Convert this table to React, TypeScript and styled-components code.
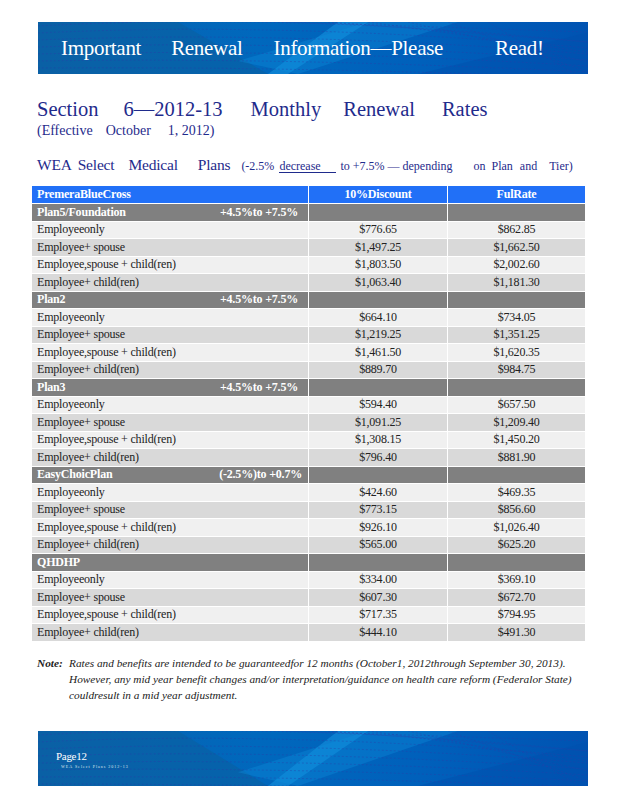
import React from "react";
import styled, { createGlobalStyle } from "styled-components";

const GlobalStyle = createGlobalStyle`
  html, body { margin: 0; padding: 0; background: #ffffff; }
  body { font-family: "Liberation Serif", "DejaVu Serif", "Times New Roman", serif; color: #222; }
`;

const Page = styled.div`
  width: 618px;
  height: 800px;
  overflow: hidden;
  display: flex;
  flex-direction: column;
`;

const Banner = styled.div<{ $h: number; $top: number }>`
  position: relative;
  overflow: hidden;
  flex: none;
  margin: ${(p) => p.$top}px 30px 0 38px;
  height: ${(p) => p.$h}px;
  background: linear-gradient(90deg, #0a63ad 0%, #0068bd 40%, #0060bb 70%, #0053b2 100%);
`;

const BannerArt = styled.svg`
  position: absolute;
  inset: 0;
  width: 100%;
  height: 100%;
  pointer-events: none;
`;

const BannerText = styled.div`
  position: relative;
  height: 100%;
  display: flex;
  align-items: center;
  padding-left: 23px;
  color: #ffffff;
  font-family: "Liberation Serif", "Times New Roman", serif;
  font-size: 21px;
  letter-spacing: -0.3px;
`;

const W = styled.span<{ $ml?: number }>`
  display: inline-block;
  margin-left: ${(p) => p.$ml ?? 0}px;
  white-space: pre;
`;

const Heading = styled.div`
  margin: 23px 0 0 37px;
  font-size: 20.5px;
  line-height: 24px;
  color: #1f2b8c;
  white-space: nowrap;
`;

const Sub = styled.div`
  margin: 2px 0 0 37px;
  font-size: 14px;
  line-height: 16px;
  color: #1f2b8c;
  white-space: nowrap;
`;

const PlanLine = styled.div`
  margin: 17px 0 0 37px;
  font-size: 15.5px;
  line-height: 18px;
  color: #1f2b8c;
  white-space: nowrap;
  display: flex;
  align-items: baseline;
  letter-spacing: -0.2px;
`;

const Small = styled.span<{ $ml?: number; $w?: number; $u?: boolean }>`
  display: inline-block;
  font-size: 12px;
  letter-spacing: 0;
  margin-left: ${(p) => p.$ml ?? 0}px;
  ${(p) => (p.$w ? `width: ${p.$w}px;` : "")}
  ${(p) => (p.$u ? "border-bottom: 1px solid #1f2b8c; line-height: 12px;" : "")}
  white-space: pre;
`;

const Table = styled.table`
  margin: 11px 0 0 31px;
  width: 554px;
  border-collapse: collapse;
  table-layout: fixed;
  font-size: 12px;
  flex: none;
`;

const Tr = styled.tr`
  height: 17.5px;
`;

const Th = styled.th<{ $align?: string }>`
  background: #2170f7;
  color: #ffffff;
  font-weight: bold;
  padding: 0 5px;
  text-align: ${(p) => p.$align ?? "center"};
  border: 1px solid #ffffff;
  border-top: none;
  line-height: 15px;
  letter-spacing: -0.2px;
`;

const GroupCell = styled.td`
  background: #808080;
  color: #ffffff;
  font-weight: bold;
  padding: 0 5px;
  border: 1px solid #ffffff;
  line-height: 15px;
  letter-spacing: -0.2px;
`;

const GroupInner = styled.div<{ $pr: number }>`
  display: flex;
  justify-content: space-between;
  padding-right: ${(p) => p.$pr}px;
`;

const Td = styled.td<{ $alt: boolean; $align?: string }>`
  background: ${(p) => (p.$alt ? "#d9d9d9" : "#f0f0f0")};
  color: #222;
  padding: 0 5px;
  text-align: ${(p) => p.$align ?? "left"};
  border: 1px solid #ffffff;
  line-height: 15px;
  letter-spacing: -0.2px;
  white-space: pre;
`;

const Note = styled.div`
  margin: 13px 0 0 37px;
  display: grid;
  grid-template-columns: 32px 1fr;
  font-style: italic;
  font-size: 11.3px;
  line-height: 16px;
  color: #222;
  white-space: nowrap;
`;

const NoteLabel = styled.span`
  font-weight: bold;
`;

const FooterText = styled.div`
  position: relative;
  padding: 19px 0 0 18px;
  color: #ffffff;
  display: flex;
  flex-direction: column;
  gap: 1px;
`;

const PageNo = styled.span`
  font-size: 11px;
  line-height: 13px;
  letter-spacing: -0.3px;
`;

const Tiny = styled.span`
  font-size: 4px;
  line-height: 6px;
  margin-left: 5px;
  letter-spacing: 1px;
  opacity: 0.85;
`;

const Art: React.FC<{ h: number }> = ({ h }) => (
  <BannerArt viewBox={`0 0 550 ${h}`} preserveAspectRatio="none">
    <polygon points={`0,0 140,0 230,${h} 0,${h}`} fill="#0b5f9f" opacity="0.55" />
    <polygon points={`230,${h} 300,0 330,0 250,${h}`} fill="#1aa0e8" opacity="0.45" />
    <polygon points={`200,${h * 0.75} 330,0 420,0 260,${h}`} fill="#0d8fdc" opacity="0.35" />
    <polygon points={`380,${h} 550,${h * 0.2} 550,${h}`} fill="#004fae" opacity="0.5" />
    {Array.from({ length: 9 }).map((_, i) => (
      <path
        key={i}
        d={`M0 ${4 + i * 7} Q 250 ${-10 + i * 9} 550 ${20 + i * 6}`}
        stroke="#2a3fa8"
        strokeWidth="0.6"
        strokeDasharray="2 2"
        fill="none"
        opacity="0.7"
      />
    ))}
    {Array.from({ length: 6 }).map((_, i) => (
      <path
        key={"b" + i}
        d={`M${250 + i * 40} 0 L ${550} ${10 + i * 10}`}
        stroke="#2a3fa8"
        strokeWidth="0.6"
        strokeDasharray="2 2"
        fill="none"
        opacity="0.6"
      />
    ))}
  </BannerArt>
);

type Row = [string, string, string];
type Group = { name: string; range: string; pr: number; rows: Row[] };

const rowsOf = (a: string[], b: string[]): Row[] => {
  const labels = ["Employeeonly", "Employee+ spouse", "Employee,spouse + child(ren)", "Employee+ child(ren)"];
  return labels.map((l, i) => [l, a[i], b[i]] as Row);
};

const groups: Group[] = [
  {
    name: "Plan5/Foundation",
    range: "+4.5%to +7.5%",
    pr: 5,
    rows: rowsOf(["$776.65", "$1,497.25", "$1,803.50", "$1,063.40"], ["$862.85", "$1,662.50", "$2,002.60", "$1,181.30"]),
  },
  {
    name: "Plan2",
    range: "+4.5%to +7.5%",
    pr: 5,
    rows: rowsOf(["$664.10", "$1,219.25", "$1,461.50", "$889.70"], ["$734.05", "$1,351.25", "$1,620.35", "$984.75"]),
  },
  {
    name: "Plan3",
    range: "+4.5%to +7.5%",
    pr: 5,
    rows: rowsOf(["$594.40", "$1,091.25", "$1,308.15", "$796.40"], ["$657.50", "$1,209.40", "$1,450.20", "$881.90"]),
  },
  {
    name: "EasyChoicPlan",
    range: "(-2.5%)to +0.7%",
    pr: 1,
    rows: rowsOf(["$424.60", "$773.15", "$926.10", "$565.00"], ["$469.35", "$856.60", "$1,026.40", "$625.20"]),
  },
  {
    name: "QHDHP",
    range: "",
    pr: 5,
    rows: rowsOf(["$334.00", "$607.30", "$717.35", "$444.10"], ["$369.10", "$672.70", "$794.95", "$491.30"]),
  },
];

export default function App() {
  return (
    <>
      <GlobalStyle />
      <Page>
        <Banner $h={52} $top={22}>
          <Art h={52} />
          <BannerText>
            <W>Important</W>
            <W $ml={30}>Renewal</W>
            <W $ml={31}>Information—Please</W>
            <W $ml={52}>Read!</W>
          </BannerText>
        </Banner>

        <Heading>
          <W>Section</W>
          <W $ml={25}>6—2012-13</W>
          <W $ml={28}>Monthly</W>
          <W $ml={22}>Renewal</W>
          <W $ml={27}>Rates</W>
        </Heading>
        <Sub>
          <W>(Effective</W>
          <W $ml={13}>October</W>
          <W $ml={17}>1, 2012)</W>
        </Sub>

        <PlanLine>
          <W>WEA</W>
          <W $ml={6}>Select</W>
          <W $ml={14}>Medical</W>
          <W $ml={20}>Plans</W>
          <Small $ml={11}>(-2.5%</Small>
          <Small $ml={5} $w={57} $u>decrease</Small>
          <Small $ml={4}>to +7.5% — depending</Small>
          <Small $ml={21}>on  Plan</Small>
          <Small $ml={7}>and</Small>
          <Small $ml={12}>Tier)</Small>
        </PlanLine>

        <Table>
          <colgroup>
            <col style={{ width: 277 }} />
            <col style={{ width: 139 }} />
            <col style={{ width: 138 }} />
          </colgroup>
          <thead>
            <Tr>
              <Th $align="left">PremeraBlueCross</Th>
              <Th>10%Discount</Th>
              <Th>FulRate</Th>
            </Tr>
          </thead>
          <tbody>
            {groups.map((g) => (
              <React.Fragment key={g.name}>
                <Tr>
                  <GroupCell>
                    <GroupInner $pr={g.pr}>
                      <span>{g.name}</span>
                      <span>{g.range}</span>
                    </GroupInner>
                  </GroupCell>
                  <GroupCell />
                  <GroupCell />
                </Tr>
                {g.rows.map((r, i) => (
                  <Tr key={g.name + i}>
                    <Td $alt={i % 2 === 1}>{r[0]}</Td>
                    <Td $alt={i % 2 === 1} $align="center">{r[1]}</Td>
                    <Td $alt={i % 2 === 1} $align="center">{r[2]}</Td>
                  </Tr>
                ))}
              </React.Fragment>
            ))}
          </tbody>
        </Table>

        <Note>
          <NoteLabel>Note:</NoteLabel>
          <span>
            Rates and benefits are intended to be guaranteedfor 12 months (October1, 2012through September 30, 2013).
            <br />
            However, any mid year benefit  changes and/or interpretation/guidance on health care reform (Federalor State)
            <br />
            couldresult in a mid year adjustment.
          </span>
        </Note>

        <Banner $h={55} $top={28}>
          <Art h={55} />
          <FooterText>
            <PageNo>Page12</PageNo>
            <Tiny>WEA Select Plans   2012-13</Tiny>
          </FooterText>
        </Banner>
      </Page>
    </>
  );
}
